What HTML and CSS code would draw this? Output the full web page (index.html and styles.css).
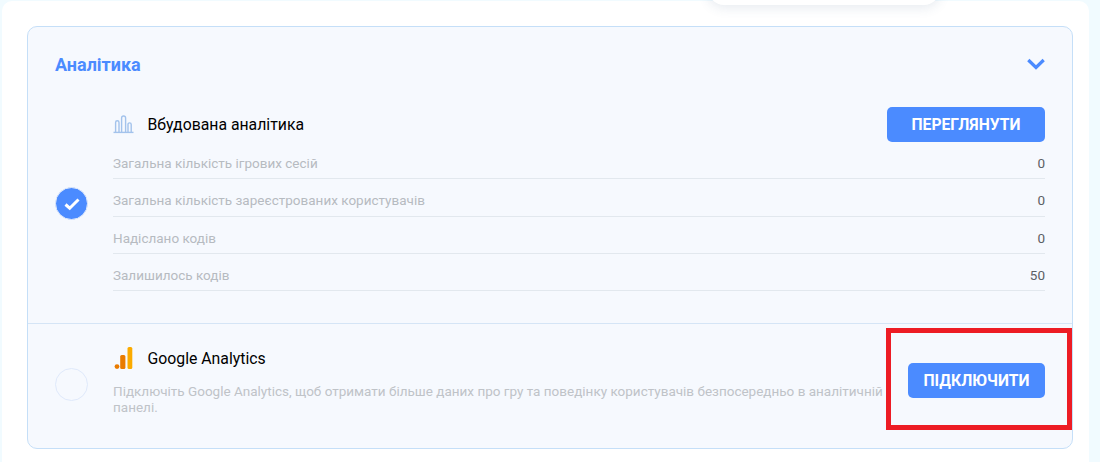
FILE: index.html
```html
<!DOCTYPE html>
<html lang="uk">
<head>
  <meta charset="UTF-8">
  <title>Аналітика</title>
  <link rel="stylesheet" href="styles.css">
</head>
<body>
  <div class="panel">
    <div class="popup"></div>

    <section class="card">
      <div class="card-head">
        <h2 class="card-title">Аналітика</h2>
        <svg class="chevron" width="18" height="12" viewBox="0 0 18 12">
          <path d="M1.3 2l7.7 7.5L16.7 2" fill="none" stroke="#4b8bff" stroke-width="3.2"/>
        </svg>
      </div>

      <div class="option option-built">
        <div class="radio radio-on">
          <svg width="20" height="16" viewBox="0 0 20 16">
            <path d="M3.5 8.5l4.2 3.7 8.8-8.7" fill="none" stroke="#fff" stroke-width="3"/>
          </svg>
        </div>
        <div class="option-body">
          <div class="option-top">
            <svg class="option-icon" width="22" height="20" viewBox="0 0 22 20">
              <g fill="none" stroke="#a3c3ec" stroke-width="1.4">
                <path d="M2.6 18V8.5a1.7 1.7 0 0 1 3.4 0V18"/>
                <path d="M8.6 18V4a2 2 0 0 1 4 0v14"/>
                <path d="M15 18v-7.5a1.6 1.6 0 0 1 3.2 0V18"/>
                <path d="M0.5 18.4h20"/>
              </g>
            </svg>
            <h3 class="option-name">Вбудована аналітика</h3>
            <button class="btn btn-view">ПЕРЕГЛЯНУТИ</button>
          </div>
          <div class="stat"><span>Загальна кількість ігрових сесій</span><b>0</b></div>
          <div class="stat"><span>Загальна кількість зареєстрованих користувачів</span><b>0</b></div>
          <div class="stat"><span>Надіслано кодів</span><b>0</b></div>
          <div class="stat"><span>Залишилось кодів</span><b>50</b></div>
        </div>
      </div>

      <div class="option option-google">
        <div class="radio"></div>
        <div class="option-body">
          <div class="option-top option-top-google">
            <svg class="option-icon" width="22" height="24" viewBox="0 0 22 24">
              <rect x="14.5" y="1" width="4.8" height="22" rx="1.5" fill="#fbab00"/>
              <rect x="7.2" y="9" width="5.2" height="14" rx="1.5" fill="#e97b00"/>
              <circle cx="4" cy="20.6" r="2.4" fill="#e97b00"/>
            </svg>
            <h3 class="option-name">Google Analytics</h3>
          </div>
          <p class="option-text">Підключіть Google Analytics, щоб отримати більше даних про гру та поведінку користувачів безпосередньо в аналітичній панелі.</p>
        </div>
        <button class="btn btn-connect">ПІДКЛЮЧИТИ</button>
      </div>
    </section>

    <div class="highlight"></div>
  </div>
</body>
</html>
```

FILE: styles.css
```css
html, body {
  height: 100%;
}

body {
  margin: 0;
  background: #f1fbff;
  font-family: Roboto, "Liberation Sans", sans-serif;
  overflow: hidden;
}

.panel {
  position: relative;
  box-sizing: border-box;
  width: 1087px;
  height: 462px;
  margin: 1px 0 0 2px;
  padding: 25px 16px 0 25px;
  background: #fff;
  border-radius: 10px 10px 0 0;
}

.popup {
  position: absolute;
  top: -21px;
  left: 706px;
  width: 232px;
  height: 25px;
  background: #fff;
  border-radius: 0 0 16px 16px;
  box-shadow: 0 3px 12px rgba(60, 90, 130, 0.12);
}

.card {
  box-sizing: border-box;
  height: 423px;
  background: #f6f9fe;
  border: 1px solid #c5dff8;
  border-radius: 10px;
}

.card-head {
  display: flex;
  align-items: center;
  justify-content: space-between;
  height: 74px;
  padding: 0 27px;
}

.card-title {
  margin: 0;
  font-size: 18px;
  font-weight: 700;
  color: #4b8bff;
}

.option {
  display: flex;
  align-items: flex-start;
  padding-left: 27px;
  padding-right: 27px;
}

.option-built {
  height: 222px;
}

.option-google {
  height: 124px;
  border-top: 1px solid #d5e5f6;
}

.radio {
  flex: none;
  box-sizing: border-box;
  display: flex;
  align-items: center;
  justify-content: center;
  width: 33px;
  height: 33px;
  margin-right: 25px;
  background: #f6f9fe;
  border: 1px solid #dfe9fb;
  border-radius: 50%;
}

.radio-on {
  margin-top: 86px;
  background: #4b8bff;
}

.option-google .radio {
  margin-top: 44px;
}

.option-body {
  flex: 1;
  min-width: 0;
}

.option-built .option-body {
  margin-top: 5px;
}

.option-google .option-body {
  margin-top: 16px;
}

.option-top {
  display: flex;
  align-items: center;
  height: 36px;
}

.option-top-google {
  margin-bottom: 7px;
}

.option-icon {
  flex: none;
  margin-right: 12.5px;
}

.option-name {
  margin: 0;
  font-size: 15.8px;
  font-weight: 400;
  color: #000;
}

.stat {
  display: flex;
  align-items: center;
  justify-content: space-between;
  box-sizing: border-box;
  height: 37.3px;
  padding-top: 6px;
  border-bottom: 1px solid #e2e8ee;
  font-size: 13.5px;
  color: #b6bbc1;
}

.stat b {
  font-weight: 400;
  color: #5c6065;
}

.option-text {
  width: 785px;
  margin: 0;
  font-size: 13.5px;
  line-height: 16px;
  color: #bfc3c8;
}

.btn {
  flex: none;
  height: 35px;
  padding: 0;
  border: none;
  border-radius: 5px;
  background: #4b8bff;
  color: #fff;
  font-family: inherit;
  font-size: 15.7px;
  font-weight: 700;
}

.btn-view {
  width: 158px;
  margin-left: auto;
}

.btn-connect {
  width: 137px;
  margin-left: -26px;
  margin-top: 39px;
}

.highlight {
  position: absolute;
  top: 327px;
  left: 884px;
  box-sizing: border-box;
  width: 186px;
  height: 102px;
  border: 5px solid #ed1c24;
}
```
